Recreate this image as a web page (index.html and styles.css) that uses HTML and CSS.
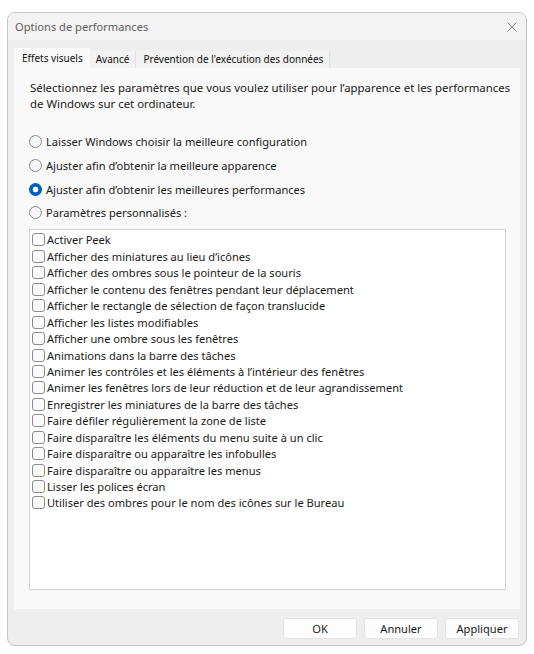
FILE: index.html
```html
<!DOCTYPE html>
<html lang="fr">
<head>
<meta charset="utf-8">
<title>Options de performances</title>
<link rel="stylesheet" href="styles.css">
</head>
<body>
<div class="window">
  <div class="titlebar">
    <span class="title">Options de performances</span>
    <svg class="close" width="10" height="10" viewBox="0 0 10 10"><path d="M0.5 0.5 L9.5 9.5 M9.5 0.5 L0.5 9.5" stroke="#8a8a8a" stroke-width="1" fill="none"/></svg>
  </div>
  <div class="tabs">
    <div class="tab active">Effets visuels</div>
    <div class="tab">Avancé</div>
    <div class="tab">Prévention de l'exécution des données</div>
  </div>
  <div class="panel">
    <p class="desc">Sélectionnez les paramètres que vous voulez utiliser pour l’apparence et les performances de Windows sur cet ordinateur.</p>
    <div class="radios">
      <div class="radio-row"><span class="radio"></span>Laisser Windows choisir la meilleure configuration</div>
      <div class="radio-row"><span class="radio"></span>Ajuster afin d’obtenir la meilleure apparence</div>
      <div class="radio-row"><span class="radio checked"></span>Ajuster afin d’obtenir les meilleures performances</div>
      <div class="radio-row"><span class="radio"></span>Paramètres personnalisés :</div>
    </div>
    <div class="list">
      <div class="item"><span class="check"></span>Activer Peek</div>
      <div class="item"><span class="check"></span>Afficher des miniatures au lieu d’icônes</div>
      <div class="item"><span class="check"></span>Afficher des ombres sous le pointeur de la souris</div>
      <div class="item"><span class="check"></span>Afficher le contenu des fenêtres pendant leur déplacement</div>
      <div class="item"><span class="check"></span>Afficher le rectangle de sélection de façon translucide</div>
      <div class="item"><span class="check"></span>Afficher les listes modifiables</div>
      <div class="item"><span class="check"></span>Afficher une ombre sous les fenêtres</div>
      <div class="item"><span class="check"></span>Animations dans la barre des tâches</div>
      <div class="item"><span class="check"></span>Animer les contrôles et les éléments à l’intérieur des fenêtres</div>
      <div class="item"><span class="check"></span>Animer les fenêtres lors de leur réduction et de leur agrandissement</div>
      <div class="item"><span class="check"></span>Enregistrer les miniatures de la barre des tâches</div>
      <div class="item"><span class="check"></span>Faire défiler régulièrement la zone de liste</div>
      <div class="item"><span class="check"></span>Faire disparaître les éléments du menu suite à un clic</div>
      <div class="item"><span class="check"></span>Faire disparaître ou apparaître les infobulles</div>
      <div class="item"><span class="check"></span>Faire disparaître ou apparaître les menus</div>
      <div class="item"><span class="check"></span>Lisser les polices écran</div>
      <div class="item"><span class="check"></span>Utiliser des ombres pour le nom des icônes sur le Bureau</div>
    </div>
  </div>
  <div class="footer">
    <button class="btn">OK</button>
    <button class="btn">Annuler</button>
    <button class="btn">Appliquer</button>
  </div>
</div>
</body>
</html>
```

FILE: styles.css
```css
* { box-sizing: border-box; }
html, body { margin: 0; padding: 0; background: #ffffff; }
body {
  font-family: "Noto Sans", "Open Sans", sans-serif;
  font-size: 11.1px;
  color: #1a1a1a;
}
.window {
  margin: 12px 0 0 7px;
  width: 520px;
  height: 634px;
  border: 1px solid #c6c6c6;
  border-radius: 8px;
  background: #eeeeee;
  overflow: hidden;
}
.titlebar {
  height: 27px;
  background: #f3f3f3;
  display: flex;
  align-items: center;
  justify-content: space-between;
  padding: 0 9px 0 7px;
}
.title { color: #5e5e5e; font-size: 11.1px; }
.close { display: block; }
.tabs {
  height: 28px;
  display: flex;
  align-items: flex-end;
  padding-left: 6px;
}
.tab {
  height: 17px;
  padding: 0 6px 0 6px;
  background: #f2f2f2;
  border-right: 1px solid #e2e2e2;
  font-size: 10px;
  line-height: 16px;
  color: #111;
}
.tab:last-child { padding: 0 6px 0 7px; }
.tab.active {
  height: 21px;
  background: #f9f9f9;
  padding: 2px 7px 0 8px;
  border-right: none;
  position: relative;
  top: 1px;
}
.panel {
  margin: 0 6px;
  height: 541px;
  background: #f9f9f9;
  padding: 12px 14px 19px 15px;
  display: flex;
  flex-direction: column;
}
.desc {
  margin: 0 -10px 0 0;
  padding-left: 1px;
  line-height: 16px;
  font-size: 11.4px;
}
.radios {
  margin-top: 18px;
  margin-bottom: 4px;
}
.radio-row {
  height: 23.7px;
  display: flex;
  align-items: center;
}
.radio {
  width: 13px;
  height: 13px;
  border-radius: 50%;
  border: 1px solid #8a8a8a;
  background: #f6f6f6;
  margin-right: 4px;
  flex: none;
}
.radio.checked {
  border: none;
  background: radial-gradient(circle, #ffffff 0 2.6px, #005fb8 3.2px);
}
.list {
  flex: 1;
  background: #ffffff;
  border: 1px solid #d2d2d2;
  padding: 2px 0 0 2px;
}
.item {
  height: 16.45px;
  display: flex;
  align-items: center;
  white-space: nowrap;
}
.check {
  width: 13px;
  height: 13px;
  border: 1px solid #8c8c8c;
  border-radius: 3px;
  background: #fbfbfb;
  margin-right: 2px;
  flex: none;
}
.footer {
  display: flex;
  justify-content: flex-end;
  gap: 7px;
  padding: 9px 7px 0 0;
}
.btn {
  width: 74px;
  height: 21px;
  font-family: "Noto Sans", "Open Sans", sans-serif;
  font-size: 11.1px;
  color: #1a1a1a;
  background: #fdfdfd;
  border: 1px solid #e3e3e3;
  border-radius: 3px;
  padding: 0;
}
```
